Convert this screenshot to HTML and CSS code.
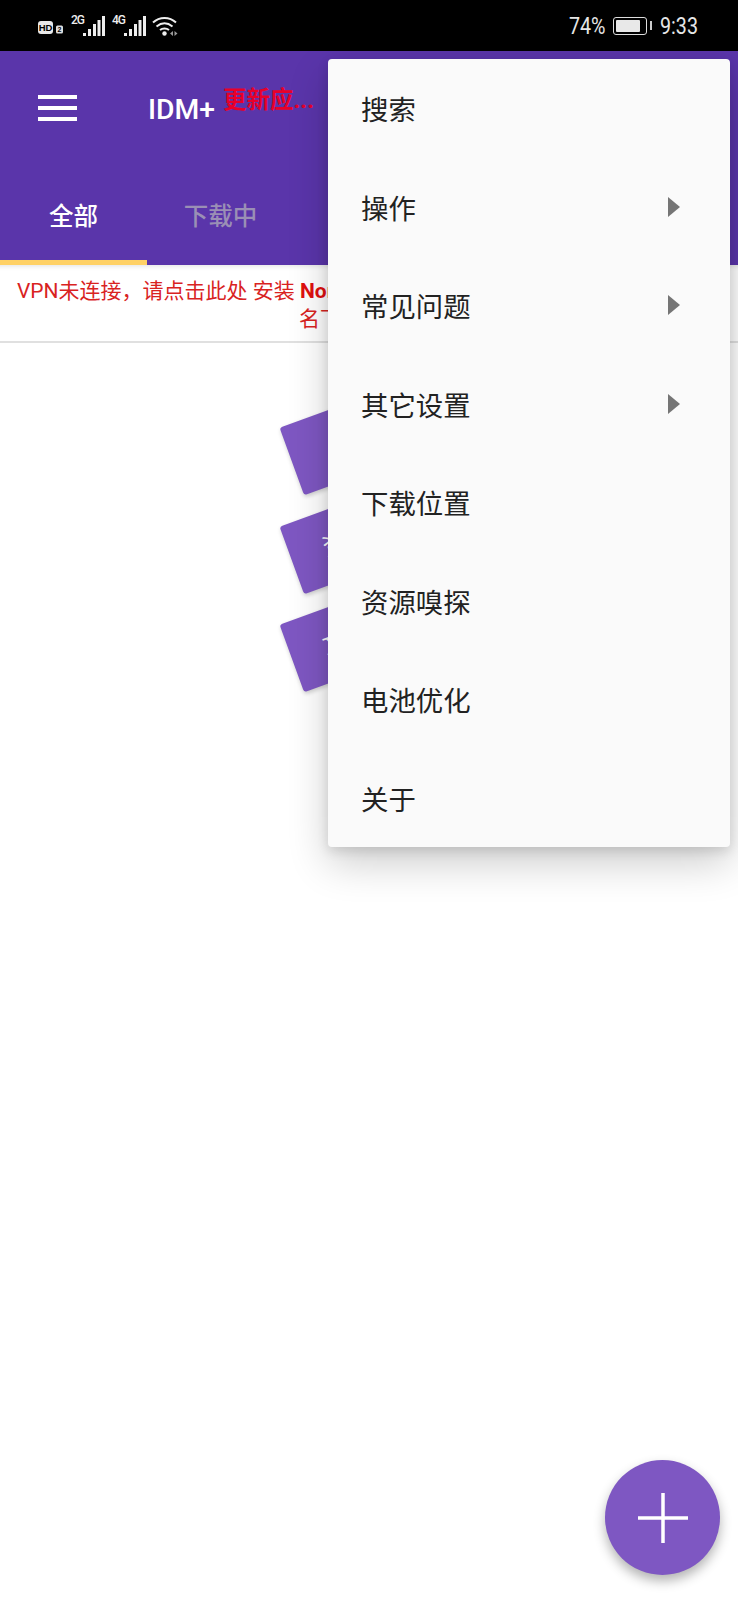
FILE: index.html
```html
<!doctype html>
<html lang="en">
<head>
    <meta charset="UTF-8">
    <title>IDM+</title>
    <link rel="stylesheet" href="styles.css">
</head>
<body>
    <div id="phone">
        <div class="status">
            <div class="status-left">
                <svg class="hd" width="26" height="20" viewBox="0 0 26 20">
                    <rect x="0" y="5" width="15" height="13" rx="3" fill="#e8e8e8"/>
                    <text x="7.500" y="15" class="hd-text">HD</text>
                    <rect x="18" y="9.500" width="7" height="8" rx="1.500" fill="#ddd"/>
                    <text x="21.500" y="16" class="hd-num">2</text>
                </svg>
                <div class="net">
                    <span class="net-type">2G</span>
                    <svg width="22" height="20" viewBox="0 0 22 20">
                        <path d="M0 17h3v3H0zM5 13h3v7H5zM10 8h3v12h-3zM14.500 4h3v16h-3zM19 0h3v20h-3z" fill="#eee"/>
                    </svg>
                </div>
                <div class="net">
                    <span class="net-type">4G</span>
                    <svg width="22" height="20" viewBox="0 0 22 20">
                        <path d="M0 17h3v3H0zM5 13h3v7H5zM10 8h3v12h-3zM14.500 4h3v16h-3zM19 0h3v20h-3z" fill="#eee"/>
                    </svg>
                </div>
                <svg class="wifi" width="26" height="20" viewBox="0 0 26 20">
                    <path d="M1 6.500C7.500 .5 17.500 .5 24 6.500M4.500 10.500C9.500 6.500 15.500 6.500 20.500 10.500M8 14C10.500 12 14.500 12 17 14" fill="none" stroke="#eee" stroke-width="2"/>
                    <circle cx="12.500" cy="17.500" r="2.200" fill="#eee"/>
                    <path d="M18 17.500l3-2.500v5zM22.500 15l3 2.500-3 2.500z" fill="#999"/>
                </svg>
            </div>
            <div class="status-right">
                <span class="narrow pct">74%</span>
                <div class="battery"><div class="battery-fill"></div></div>
                <div class="battery-tip"></div>
                <span class="narrow clock">9:33</span>
            </div>
        </div>

        <div class="appbar">
            <div class="toolbar">
                <div class="burger"><i></i><i></i><i></i></div>
                <span class="title">IDM+</span>
                <span class="update">更新应...</span>
            </div>
            <div class="tabs">
                <div class="tab tab-on">全部</div>
                <div class="tab">下载中</div>
            </div>
        </div>

        <div class="notice">
            <p class="line-one">VPN未连接，请点击此处 安装 <b>Nor</b></p>
            <p class="line-two">名下</p>
        </div>

        <div class="empty">
            <div class="card"></div>
            <div class="card">资</div>
            <div class="card">文</div>
        </div>

        <ul class="menu">
            <li>搜索</li>
            <li>操作<i class="arrow"></i></li>
            <li>常见问题<i class="arrow"></i></li>
            <li>其它设置<i class="arrow"></i></li>
            <li>下载位置</li>
            <li>资源嗅探</li>
            <li>电池优化</li>
            <li>关于</li>
        </ul>

        <div class="fab">
            <svg width="50" height="50" viewBox="0 0 50 50">
                <path d="M0 23.250h50v3.500H0zM23.250 0h3.500v50h-3.500z" fill="#fff"/>
            </svg>
        </div>
    </div>
</body>
</html>
```

FILE: styles.css
```css
*{
    margin: 0;
    padding: 0;
    box-sizing: border-box;
}
li{
    list-style: none;
}
html,body{
    background: #fff;
}
#phone{
    position: relative;
    width: 738px;
    height: 1600px;
    overflow: hidden;
    font-family: Roboto, "Noto Sans CJK SC", sans-serif;
}
.status{
    height: 51px;
    background: #000;
    display: flex;
    justify-content: space-between;
    align-items: center;
    padding: 0 40px 0 38px;
}
.status-left{
    display: flex;
    align-items: center;
    gap: 7px;
}
.hd-text{
    font-family: "Liberation Sans", sans-serif;
    font-size: 9.500px;
    font-weight: bold;
    fill: #000;
    text-anchor: middle;
}
.hd-num{
    font-family: "Liberation Sans", sans-serif;
    font-size: 7px;
    font-weight: bold;
    fill: #000;
    text-anchor: middle;
}
.net{
    display: flex;
    height: 20px;
}
.net-type{
    width: 12px;
    font-size: 12px;
    font-weight: 500;
    line-height: 9px;
    letter-spacing: -1px;
    color: #eee;
}
.wifi{
    margin-left: -1px;
}
.status-right{
    display: flex;
    align-items: center;
    color: #e6e6e6;
    font-size: 24px;
}
.narrow{
    display: block;
    transform: scaleX(.82);
    transform-origin: left center;
}
.pct{
    width: 36px;
}
.battery{
    width: 34px;
    height: 18px;
    margin-left: 8px;
    border: 1px solid #ddd;
    border-radius: 3px;
    padding: 2px;
}
.battery-fill{
    width: 24px;
    height: 100%;
    background: #e8e8e8;
    border-radius: 1px;
}
.battery-tip{
    width: 2px;
    height: 9px;
    margin-left: 3px;
    background: #ccc;
}
.clock{
    width: 38px;
    margin-left: 8px;
}
.appbar{
    height: 214px;
    background: #5a35aa;
}
.toolbar{
    height: 113px;
    display: flex;
    align-items: center;
    position: relative;
}
.burger{
    margin-left: 38px;
    margin-top: 1px;
    width: 39px;
    display: flex;
    flex-direction: column;
    gap: 7px;
}
.burger i{
    display: block;
    height: 4px;
    background: #fff;
}
.title{
    margin-left: 71px;
    margin-top: 4px;
    font-size: 28.300px;
    font-weight: 500;
    color: #fff;
}
.update{
    position: absolute;
    left: 223px;
    top: 30px;
    font-size: 23.500px;
    font-weight: 700;
    color: #e8002a;
}
.tabs{
    display: flex;
    height: 101px;
}
.tab{
    width: 147px;
    height: 101px;
    padding-top: 35px;
    text-align: center;
    font-size: 24.500px;
    line-height: 36px;
    font-weight: 500;
    color: #9a8fb5;
}
.tab-on{
    color: #fff;
    border-bottom: 5px solid #ffd166;
}
.notice{
    height: 78px;
    padding-top: 12px;
    border-bottom: 2px solid #e0e0e0;
    box-shadow: inset 0 6px 5px -5px rgba(0,0,0,.12);
    font-size: 21px;
    line-height: 28px;
    color: #d9231f;
    white-space: nowrap;
}
.line-one{
    padding-left: 17px;
}
.line-two{
    padding-left: 299px;
}
.notice b{
    color: #e01010;
}
.empty{
    position: relative;
}
.card{
    position: absolute;
    left: 286.500px;
    width: 161px;
    height: 72px;
    background: #7e57c2;
    border-radius: 3px;
    transform: rotate(-20deg);
    box-shadow: 0 2px 4px rgba(0,0,0,.2);
    color: #fff;
    font-size: 24px;
    line-height: 72px;
    padding-left: 34px;
}
.card:nth-child(1){
    top: 55px;
}
.card:nth-child(2){
    top: 153.500px;
}
.card:nth-child(3){
    top: 252px;
}
.menu{
    position: absolute;
    left: 328px;
    top: 59px;
    width: 402px;
    height: 788px;
    background: #fafafa;
    border-radius: 4px;
    box-shadow: 0 16px 40px rgba(0,0,0,.2), 0 4px 12px rgba(0,0,0,.12);
    display: flex;
    flex-direction: column;
}
.menu li{
    flex: 1;
    display: flex;
    align-items: center;
    justify-content: space-between;
    padding: 0 50px 0 33px;
    font-size: 27.400px;
    color: #222;
}
.arrow{
    width: 0;
    height: 0;
    border-left: 12px solid #757575;
    border-top: 10px solid transparent;
    border-bottom: 10px solid transparent;
}
.fab{
    position: absolute;
    left: 605px;
    top: 1460px;
    width: 115px;
    height: 115px;
    border-radius: 50%;
    background: #7e57c2;
    box-shadow: 0 6px 12px rgba(0,0,0,.3);
    display: flex;
    align-items: center;
    justify-content: center;
}
```
